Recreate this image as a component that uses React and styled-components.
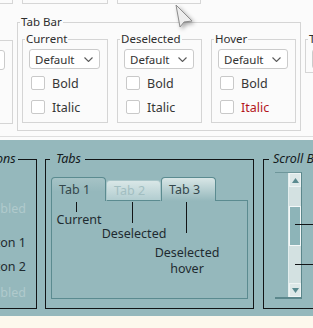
import React from 'react';
import styled, { createGlobalStyle } from 'styled-components';

const GlobalStyle = createGlobalStyle`
  html, body { margin: 0; padding: 0; }
  body {
    width: 313px;
    height: 328px;
    overflow: hidden;
    background: #fdf8ed;
    font-family: "Noto Sans", "DejaVu Sans", sans-serif;
  }
`;

const Page = styled.div`
  position: relative;
  width: 313px;
  height: 328px;
  overflow: hidden;
  display: flex;
  flex-direction: column;
`;

/* ---------- settings (white) part ---------- */

const SettingsPanel = styled.div`
  background: #fbfbfb;
  padding-bottom: 3px;
  overflow: hidden;
  flex-shrink: 0;
`;

const SettingsSheet = styled.div`
  height: 136px;
  border-bottom: 1px solid #dedede;
  display: flex;
  flex-direction: column;
`;

const StubRow = styled.div`
  display: flex;
  height: 4px;
  flex-shrink: 0;
`;

const Stub = styled.div`
  flex-shrink: 0;
  box-sizing: border-box;
  width: ${p => p.$w}px;
  margin-left: ${p => p.$ml}px;
  height: 4px;
  border: 1px solid #d6d6d6;
  border-top: none;
`;

const GroupRow = styled.div`
  display: flex;
  align-items: flex-start;
`;

const Group = styled.fieldset`
  flex-shrink: 0;
  box-sizing: border-box;
  min-width: 0;
  width: ${p => p.$w}px;
  margin: ${p => p.$mt || 0}px 0 0 ${p => p.$ml || 0}px;
  padding: 0;
  border: 1px solid #d5d5d5;
`;

const Title = styled.legend`
  margin-left: 2px;
  padding: 0 1px;
  font-size: 11.5px;
  line-height: 14px;
  color: #2e2e2e;
  white-space: nowrap;
`;

const OuterBody = styled.div`
  display: flex;
  gap: 9px;
  padding: 3px 5px 7px 4px;
`;

const GroupBody = styled.div`
  display: flex;
  flex-direction: column;
  padding: 3px 7px 3px 6px;
`;

const CutGroup = styled.div`
  flex-shrink: 0;
  box-sizing: border-box;
  width: 73px;
  height: 84px;
  margin: 36px 0 0 -60px;
  padding: 9px 7px 0 6px;
  border: 1px solid #d5d5d5;
  border-left: none;
`;

const Combo = styled.div`
  box-sizing: border-box;
  height: 20px;
  display: flex;
  align-items: center;
  justify-content: space-between;
  padding: 0 6px 0 5px;
  background: #fff;
  border: 1px solid #cbcbcb;
  border-radius: 3px;
  font-size: 11.5px;
  color: #333;
`;

const CheckRow = styled.div`
  height: 24px;
  display: flex;
  align-items: center;
  padding-left: 2px;
  margin-top: ${p => p.$mt || 0}px;
`;

const CheckBox = styled.span`
  box-sizing: border-box;
  width: 14px;
  height: 14px;
  margin-right: 7px;
  background: #fff;
  border: 1px solid #c9c9c9;
  border-radius: 2px;
`;

const CheckLabel = styled.span`
  font-size: 12.5px;
  color: ${p => (p.$red ? '#b3161c' : '#363636')};
`;

const Chevron = () => (
  <svg width="9" height="5" viewBox="0 0 9 5">
    <polyline points="0.5,0.5 4.5,4.5 8.5,0.5" fill="none" stroke="#5a5a5a" strokeWidth="1.1" />
  </svg>
);

const FontGroup = ({ title, red, width }) => (
  <Group $w={width}>
    <Title>{title}</Title>
    <GroupBody>
      <Combo>
        <span>Default</span>
        <Chevron />
      </Combo>
      <CheckRow $mt={2}>
        <CheckBox />
        <CheckLabel>Bold</CheckLabel>
      </CheckRow>
      <CheckRow>
        <CheckBox />
        <CheckLabel $red={red}>Italic</CheckLabel>
      </CheckRow>
    </GroupBody>
  </Group>
);

/* ---------- preview (teal) part ---------- */

const PreviewPanel = styled.div`
  flex-shrink: 0;
  height: 176px;
  background: #95b8bc;
  display: flex;
  align-items: flex-start;
`;

const PreviewGroup = styled.fieldset`
  flex-shrink: 0;
  box-sizing: border-box;
  min-width: 0;
  width: ${p => p.$w}px;
  margin: 11px 0 0 ${p => p.$ml || 0}px;
  padding: 0;
  border: 1px solid #121416;
`;

const PreviewTitle = styled.legend`
  margin-left: ${p => p.$ml}px;
  padding: 0 ${p => p.$pr}px 0 ${p => p.$pl}px;
  font-size: 12.5px;
  line-height: 16px;
  font-style: italic;
  color: #141a1c;
  white-space: nowrap;
`;

const PreviewBody = styled.div`
  box-sizing: border-box;
  height: 141px;
  position: relative;
  padding: ${p => p.$pad};
`;

const ButtonList = styled.div`
  display: flex;
  flex-direction: column;
  align-items: flex-end;
`;

const ButtonText = styled.div`
  font-size: 12.5px;
  line-height: 16px;
  white-space: nowrap;
  margin-top: ${p => p.$mt}px;
  color: ${p => (p.$off ? '#b0cacc' : '#1f2b30')};
`;

const TabWidget = styled.div`
  display: flex;
  flex-direction: column;
`;

const TabBar = styled.div`
  display: flex;
  align-items: flex-end;
  height: 24px;
`;

const Tab = styled.div`
  box-sizing: border-box;
  flex-shrink: 0;
  width: 55px;
  height: ${p => (p.$raised ? 24 : 21)}px;
  padding-left: 7px;
  display: flex;
  align-items: center;
  font-size: 12.5px;
  border: 1px solid ${p => (p.$kind === 'off' ? '#a9c6c9' : '#5b8b90')};
  border-bottom: none;
  border-radius: 4px 4px 0 0;
  color: ${p => (p.$kind === 'off' ? '#a2bec1' : '#34474b')};
  background: ${p =>
    p.$kind === 'current'
      ? 'linear-gradient(#a6c3c6, #95b8bc 60%)'
      : p.$kind === 'off'
      ? 'linear-gradient(#d9e7e7, #b2cdd0)'
      : 'linear-gradient(#d8e6e6, #95b8bc)'};
  ${p => (p.$kind === 'off' ? 'border-bottom: 1px solid #5b8b90;' : '')}
`;

const TabFill = styled.div`
  flex: 1;
  align-self: stretch;
  border-bottom: 1px solid #5b8b90;
`;

const TabPane = styled.div`
  box-sizing: border-box;
  height: 98px;
  padding-top: 1px;
  border: 1px solid #5b8b90;
  border-top: none;
  display: flex;
`;

const Note = styled.div`
  flex-shrink: 0;
  width: ${p => p.$w}px;
  display: flex;
  flex-direction: column;
  align-items: flex-start;
`;

const NoteLine = styled.div`
  width: 1px;
  height: ${p => p.$h}px;
  margin-left: ${p => p.$ml}px;
  background: #121416;
`;

const NoteText = styled.div`
  align-self: center;
  margin-top: ${p => p.$mt}px;
  font-size: 12.5px;
  line-height: 16px;
  text-align: center;
  white-space: nowrap;
  color: #1f2b30;
`;

const ScrollBox = styled.div`
  position: relative;
  box-sizing: border-box;
  width: 27px;
  height: 127px;
  margin-left: 11px;
  border-top: 1px solid #6e969a;
  border-bottom: 2px solid #5b878c;
  border-right: 1px solid #5b878c;
  display: flex;
  justify-content: flex-end;
`;

const ScrollBar = styled.div`
  width: 13px;
  display: flex;
  flex-direction: column;
  border-left: 1px solid #e4eeee;
  box-sizing: border-box;
  background: #d3e1e1;
`;

const ArrowButton = styled.div`
  height: 14px;
  flex-shrink: 0;
  display: flex;
  align-items: center;
  justify-content: center;
  background: #dde8e8;
  box-shadow: inset 0 0 0 1px #eef4f4;
`;

const Track = styled.div`
  flex: 1;
`;

const Handle = styled.div`
  box-sizing: border-box;
  height: 40px;
  margin-top: 19px;
  background: #8db4b8;
  border: 1px solid #f4f8f8;
`;

const Pointer = styled.div`
  position: absolute;
  left: ${p => p.$x}px;
  top: ${p => p.$y}px;
  width: 40px;
  height: 1px;
  background: #121416;
`;

const Tri = ({ down }) => (
  <svg width="7" height="5" viewBox="0 0 7 5">
    <polygon points={down ? '0,0 7,0 3.5,5' : '3.5,0 7,5 0,5'} fill="#5a8a8f" />
  </svg>
);

const Cursor = styled.svg`
  position: absolute;
  left: 172px;
  top: 2px;
  filter: drop-shadow(2px 2px 2px rgba(0, 0, 0, 0.35));
`;

export default function App() {
  return (
    <Page>
      <GlobalStyle />
      <SettingsPanel>
        <SettingsSheet>
          <StubRow>
            <Stub $ml={-40} $w={53} />
            <Stub $ml={9} $w={86} />
            <Stub $ml={9} $w={84} />
          </StubRow>
          <GroupRow>
            <CutGroup>
              <Combo />
            </CutGroup>
            <Group $w={284} $ml={4} $mt={11}>
              <Title>Tab Bar</Title>
              <OuterBody>
                <FontGroup title="Current" width={86} />
                <FontGroup title="Deselected" width={85} />
                <FontGroup title="Hover" width={85} red />
              </OuterBody>
            </Group>
            <Group $w={60} $ml={4} $mt={28}>
              <Title>Tab Widget</Title>
              <GroupBody>
                <Combo>
                  <span>Default</span>
                  <Chevron />
                </Combo>
              </GroupBody>
            </Group>
          </GroupRow>
        </SettingsSheet>
      </SettingsPanel>

      <PreviewPanel>
        <PreviewGroup $w={121} $ml={-84}>
          <PreviewTitle $ml={16} $pl={5} $pr={2}>Radio Buttons</PreviewTitle>
          <PreviewBody $pad="0 10px 0 0">
            <ButtonList>
              <ButtonText $mt={34} $off>Disabled</ButtonText>
              <ButtonText $mt={18}>Radio Button 1</ButtonText>
              <ButtonText $mt={8}>Radio Button 2</ButtonText>
              <ButtonText $mt={10} $off>Disabled</ButtonText>
            </ButtonList>
          </PreviewBody>
        </PreviewGroup>

        <PreviewGroup $w={209} $ml={8}>
          <PreviewTitle $ml={4} $pl={6} $pr={4}>Tabs</PreviewTitle>
          <PreviewBody $pad="10px 5px 9px 5px">
            <TabWidget>
              <TabBar>
                <Tab $kind="current" $raised>Tab 1</Tab>
                <Tab $kind="off">Tab 2</Tab>
                <Tab $kind="hover" $raised>Tab 3</Tab>
                <TabFill />
              </TabBar>
              <TabPane>
                <Note $w={54}>
                  <NoteLine $h={10} $ml={24} />
                  <NoteText $mt={0}>Current</NoteText>
                </Note>
                <Note $w={56}>
                  <NoteLine $h={21} $ml={26} />
                  <NoteText $mt={3}>Deselected</NoteText>
                </Note>
                <Note $w={50}>
                  <NoteLine $h={31} $ml={24} />
                  <NoteText $mt={12}>Deselected<br />hover</NoteText>
                </Note>
              </TabPane>
            </TabWidget>
          </PreviewBody>
        </PreviewGroup>

        <PreviewGroup $w={90} $ml={9}>
          <PreviewTitle $ml={5} $pl={4} $pr={4}>Scroll Bars</PreviewTitle>
          <PreviewBody $pad="5px 0 0 0">
            <ScrollBox>
              <ScrollBar>
                <ArrowButton><Tri /></ArrowButton>
                <Track><Handle /></Track>
                <ArrowButton><Tri down /></ArrowButton>
              </ScrollBar>
              <Pointer $x={20} $y={51} />
              <Pointer $x={20} $y={91} />
            </ScrollBox>
          </PreviewBody>
        </PreviewGroup>
      </PreviewPanel>

      <Cursor width="26" height="30" viewBox="0 0 26 30">
        <polygon points="4,3 8,25 12,20 20,19" fill="#ededed" stroke="#8c8c8c" strokeWidth="1" strokeLinejoin="round" />
      </Cursor>
    </Page>
  );
}
